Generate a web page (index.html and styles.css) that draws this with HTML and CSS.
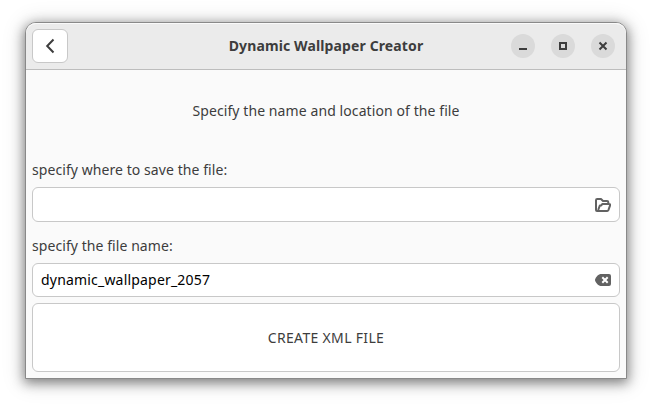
FILE: index.html
```
<!DOCTYPE html>
<html lang="en">
<head>
<meta charset="utf-8">
<title>Dynamic Wallpaper Creator</title>
<link rel="stylesheet" href="styles.css">
</head>
<body>
<main class="window">
  <header class="headerbar">
    <button class="back" aria-label="Back">
      <svg width="16" height="16" viewBox="0 0 16 16"><path d="M11.500 1.500 5.200 8l6.300 6.500" fill="none" stroke="#3d3d3d" stroke-width="2"/></svg>
    </button>
    <h1 class="title">Dynamic Wallpaper Creator</h1>
    <div class="controls">
      <button class="control" aria-label="Minimize"><svg width="16" height="16" viewBox="0 0 16 16"><path d="M4 10h8v2H4z" fill="#3d3d3d"/></svg></button>
      <button class="control" aria-label="Maximize"><svg width="16" height="16" viewBox="0 0 16 16"><path d="M5 5h6v6H5z" fill="none" stroke="#3d3d3d" stroke-width="2"/></svg></button>
      <button class="control" aria-label="Close"><svg width="16" height="16" viewBox="0 0 16 16"><path d="m4.500 4.500 7 7m0-7-7 7" fill="none" stroke="#3d3d3d" stroke-width="2"/></svg></button>
    </div>
  </header>
  <section class="content">
    <p class="intro">Specify the name and location of the file</p>
    <div class="label label-location">specify where to save the file:</div>
    <div class="entry entry-location">
      <span class="value"></span>
      <svg width="16" height="16" viewBox="0 0 16 16"><path d="M2.600 14H2a1 1 0 0 1-1-1V3.200A1.200 1.200 0 0 1 2.200 2H6l2 2h4a1.300 1.300 0 0 1 1.300 1.300V7M2.600 14h9.600a1.300 1.300 0 0 0 1.200-.8l1.600-4.600A1 1 0 0 0 14.200 7H7.400L6 8.600H4.800L3.200 13" fill="none" stroke="#626262" stroke-width="2" stroke-linejoin="round"/></svg>
    </div>
    <div class="label label-name">specify the file name:</div>
    <div class="entry">
      <span class="value">dynamic_wallpaper_2057</span>
      <svg width="16" height="16" viewBox="0 0 16 16"><path d="M5.500 2H14a2 2 0 0 1 2 2v8a2 2 0 0 1-2 2H5.500C3.500 14 0 10 0 8s3.500-6 5.500-6z" fill="#626262"/><path d="m7.300 5.300 5.400 5.400m0-5.400-5.400 5.400" fill="none" stroke="#fff" stroke-width="2"/></svg>
    </div>
    <button class="create">CREATE XML FILE</button>
  </section>
</main>
</body>
</html>
```
FILE: styles.css
```
* { box-sizing: border-box; }
body {
  margin: 0;
  padding: 22px 25px 0;
  height: 407px;
  overflow: hidden;
  background: #fff;
  color: #3d3d3d;
  font: 14px/20px "Noto Sans", "Open Sans", sans-serif;
}
button { padding: 0; border: 0; font: inherit; color: inherit; }
svg { display: block; flex: none; }
.window {
  width: 602px;
  height: 357px;
  border: 1px solid #898989;
  border-radius: 11px 11px 0 0;
  background: #fafafa;
  box-shadow: 0 3px 12px 1px rgba(0, 0, 0, .45), 0 2px 22px 3px rgba(0, 0, 0, .12);
}
.headerbar {
  display: grid;
  grid-template-columns: 115px 1fr 110px;
  align-items: center;
  height: 47px;
  padding: 0 11px 0 6px;
  border-bottom: 1px solid #bdbdbd;
  border-radius: 10px 10px 0 0;
  background: #ebebeb;
  box-shadow: inset 0 1px #fafafa;
}
.back {
  display: grid;
  place-items: center;
  width: 36px;
  height: 34px;
  border: 1px solid #c8c8c8;
  border-radius: 6px;
  background: #fff;
}
.title {
  margin: 0;
  text-align: center;
  font-size: 14px;
  font-weight: 700;
  line-height: 20px;
  letter-spacing: .12px;
  white-space: nowrap;
}
.controls { display: flex; justify-content: flex-end; gap: 16px; }
.control {
  display: grid;
  place-items: center;
  flex: none;
  width: 24px;
  height: 24px;
  border-radius: 50%;
  background: #dadada;
}
.content { display: flex; flex-direction: column; padding: 0 6px; white-space: nowrap; }
.intro { margin: 31px 0 39px; text-align: center; letter-spacing: .09px; }
.label { height: 20px; letter-spacing: .07px; }
.label-location { margin-bottom: 7px; }
.label-name { margin: 14px 0 7px; }
.entry {
  display: flex;
  align-items: center;
  justify-content: space-between;
  height: 34px;
  padding: 0 8px;
  border: 1px solid #c8c8c8;
  border-radius: 6px;
  background: #fff;
  color: #000;
}
.value { letter-spacing: .19px; }
.entry-location { height: 35px; }
.create {
  height: 69px;
  margin-top: 6px;
  border: 1px solid #c8c8c8;
  border-radius: 6px;
  background: #fff;
  letter-spacing: .33px;
}
```
